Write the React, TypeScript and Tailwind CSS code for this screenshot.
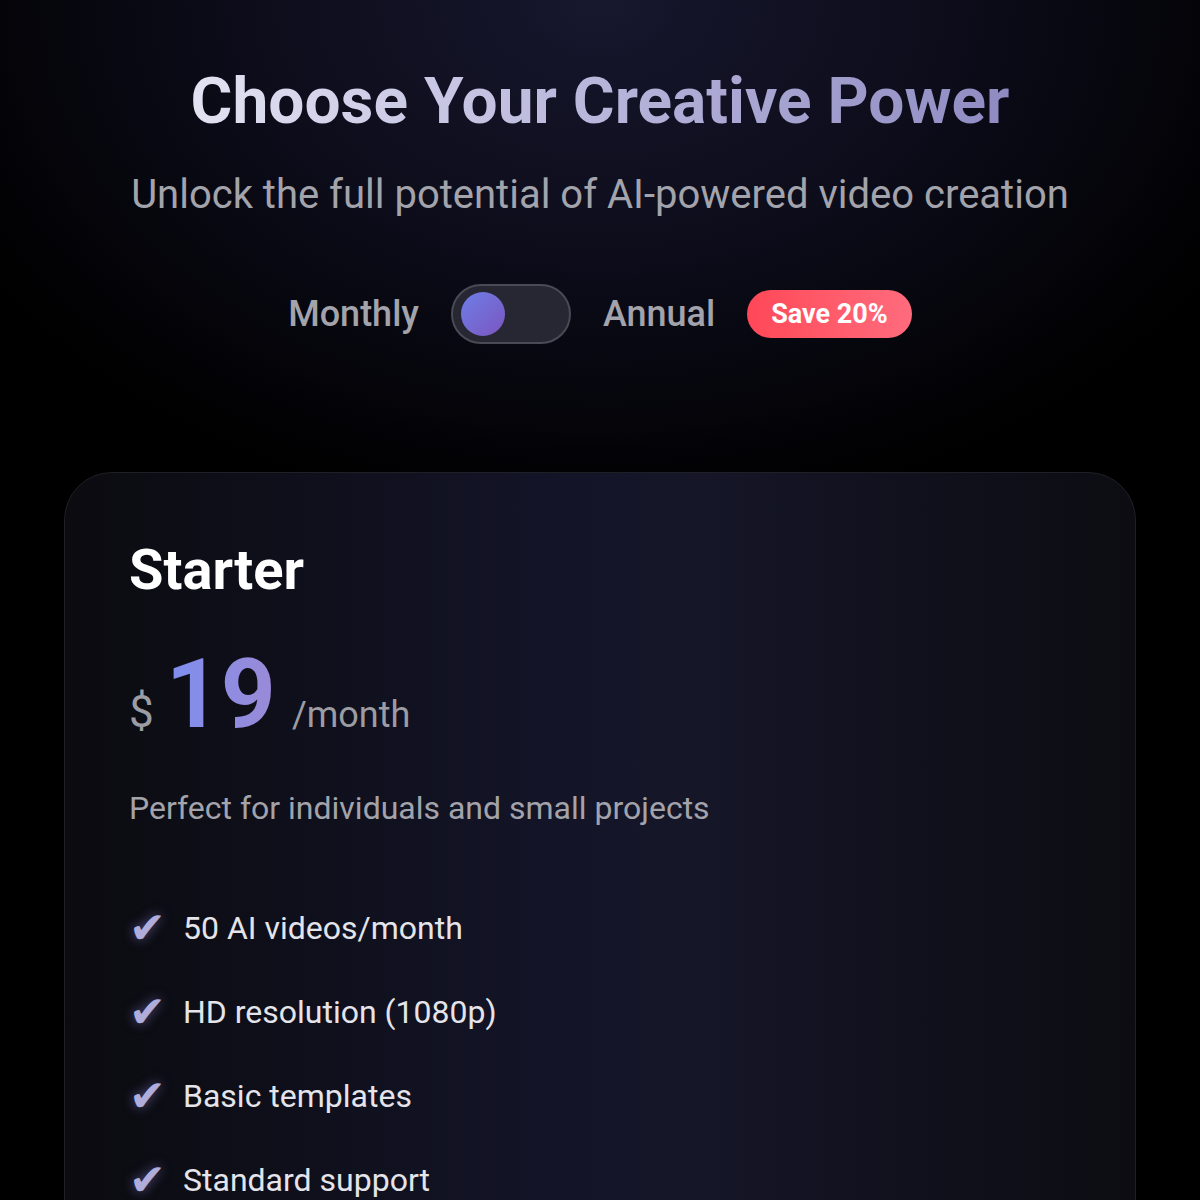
import React, { useState } from 'react';

const FEATURES = ['50 AI videos/month', 'HD resolution (1080p)', 'Basic templates', 'Standard support'];

export default function App() {
  const [annual, setAnnual] = useState(false);

  return (
    <div
      className="min-h-[1200px] w-full overflow-hidden bg-black bg-[radial-gradient(ellipse_60%_40%_at_50%_0%,#17172e_0%,#0b0b18_55%,#000000_100%)] text-white"
      style={{ fontFamily: 'Roboto, "Noto Sans", sans-serif' }}
    >
      <header className="flex flex-col items-center pt-16">
        <h1 className="bg-gradient-to-r from-[#e2e2f2] to-[#8f8bc2] bg-clip-text text-[64px] leading-[1.2] font-bold text-transparent">
          Choose Your Creative Power
        </h1>
        <p className="mt-[29px] text-[40px] leading-[1.25] text-[#a3a3ab]">
          Unlock the full potential of AI-powered video creation
        </p>

        <div className="mt-16 flex items-center gap-8">
          <span className="text-[36px] leading-none font-medium text-[#a3a3ab]">Monthly</span>
          <button
            type="button"
            onClick={() => setAnnual((v) => !v)}
            className="flex h-[60px] w-[120px] items-center rounded-full border-2 border-[#4a4a56] bg-[#272734] px-2"
          >
            <span
              className={`h-[44px] w-[44px] rounded-full bg-gradient-to-br from-[#6c7ee6] to-[#7a55c0] transition-transform ${annual ? 'translate-x-[56px]' : ''}`}
            />
          </button>
          <span className="text-[36px] leading-none font-medium text-[#a3a3ab]">Annual</span>
          <span className="flex h-[48px] items-center rounded-full bg-gradient-to-r from-[#ff4757] to-[#ff6b7d] px-6 text-[27px] font-bold text-white">
            Save 20%
          </span>
        </div>
      </header>

      <section className="mx-16 mt-32 rounded-t-[48px] border border-[#1f1f26] bg-[linear-gradient(90deg,#0b0b10_0%,#131427_45%,#151628_58%,#0c0c12_100%)] px-16 pt-16 pb-24">
        <h2 className="text-[56px] leading-[1.2] font-bold text-white">Starter</h2>

        <div className="mt-[42px] flex items-baseline">
          <span className="text-[44px] leading-none text-[#9c9ca4]">$</span>
          <span className="ml-3 bg-gradient-to-r from-[#7e8ef0] to-[#9a8ad6] bg-clip-text text-[96px] leading-none font-bold text-transparent">
            19
          </span>
          <span className="ml-4 text-[36px] leading-none text-[#9c9ca4]">/month</span>
        </div>

        <p className="mt-11 text-[32px] leading-[1.4] text-[#a3a3ab]">Perfect for individuals and small projects</p>

        <ul className="mt-[73px] flex flex-col gap-9">
          {FEATURES.map((f) => (
            <li key={f} className="flex h-[48px] items-center">
              <span
                className="w-[54px] text-[44px] leading-none text-[#b0acdc] [text-shadow:0_0_12px_rgba(150,140,230,0.55)]"
                style={{ fontFamily: '"DejaVu Sans", sans-serif' }}
              >
                ✔
              </span>
              <span className="text-[32px] leading-none text-[#e4e4ea]">{f}</span>
            </li>
          ))}
        </ul>
      </section>
    </div>
  );
}
